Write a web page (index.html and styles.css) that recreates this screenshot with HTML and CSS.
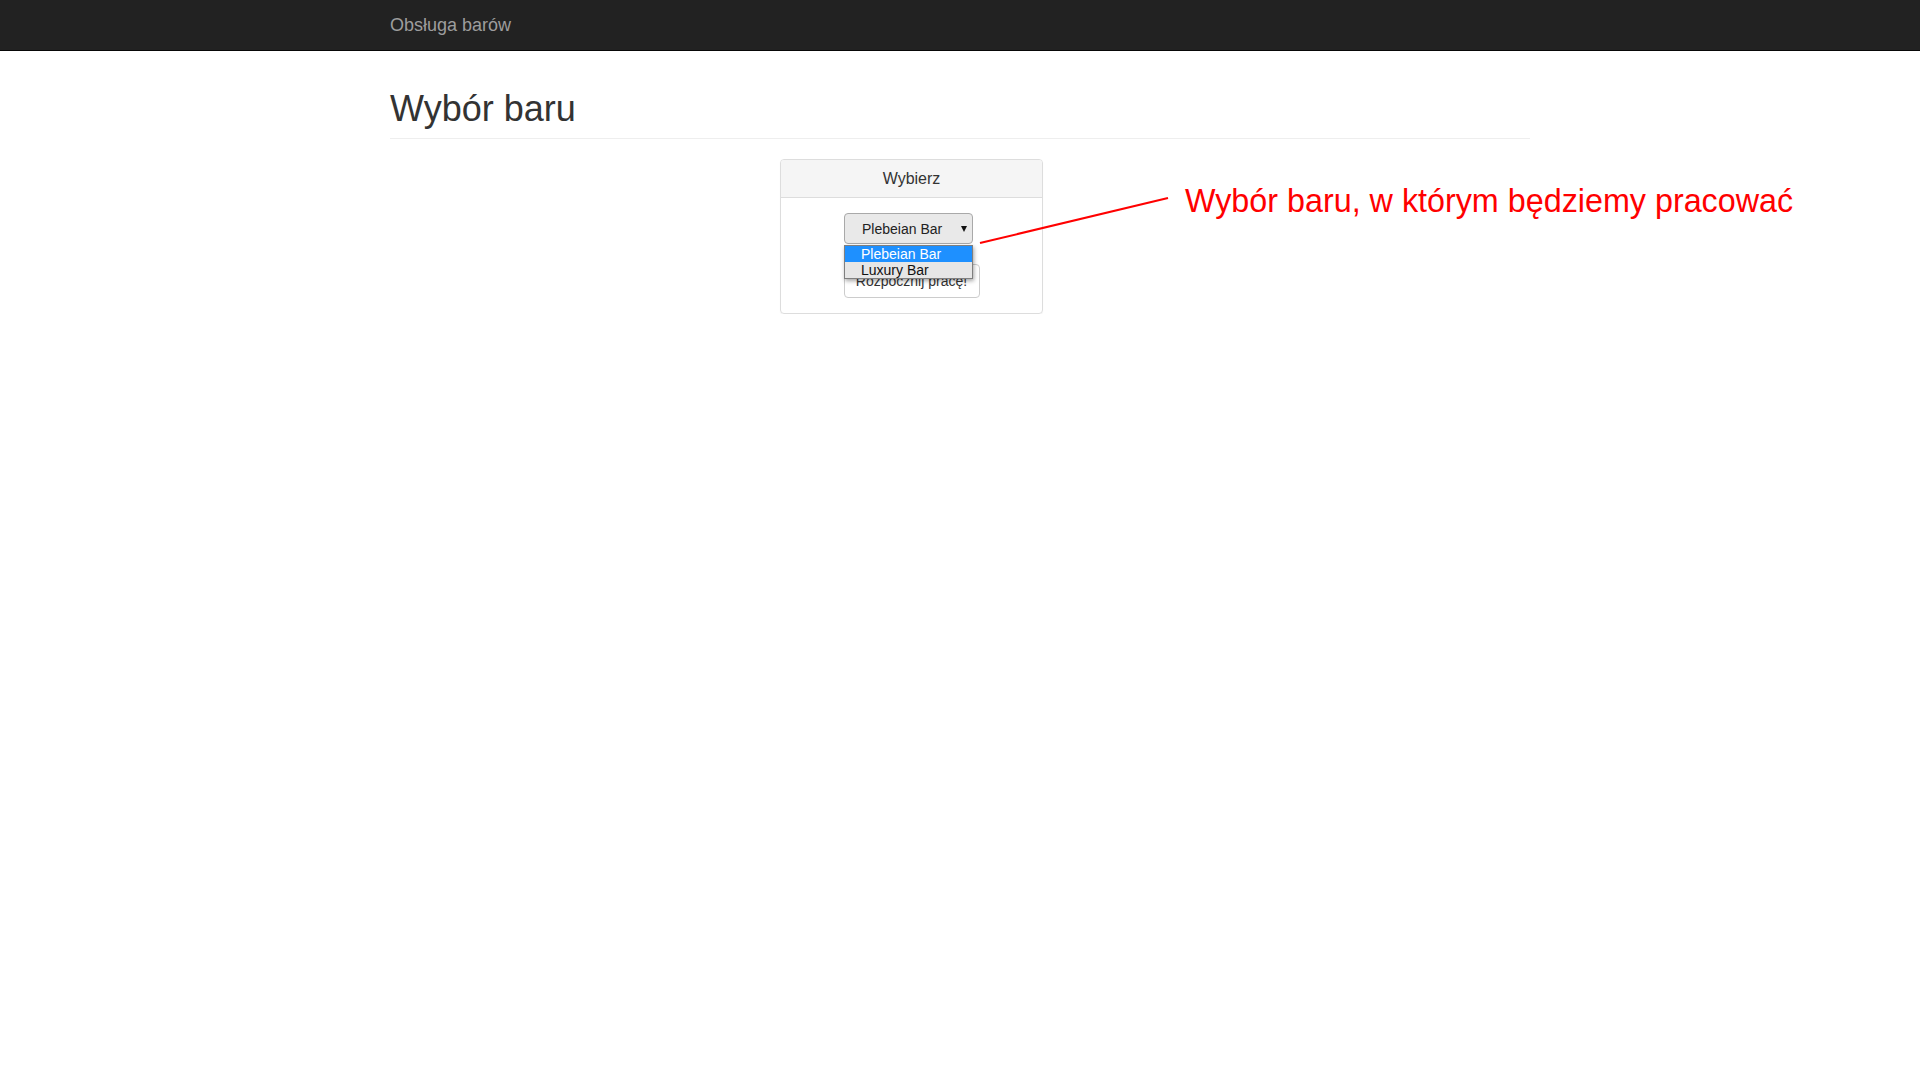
FILE: index.html
```html
<!DOCTYPE html>
<html lang="pl">
<head>
<meta charset="utf-8">
<title>Wybór baru</title>
<link rel="stylesheet" href="styles.css">
</head>
<body>
<nav class="navbar">
  <div class="container">
    <a class="brand" href="#">Obsługa barów</a>
  </div>
</nav>
<main class="container">
  <div class="page-header">
    <h1>Wybór baru</h1>
  </div>
  <div class="panel">
    <div class="panel-heading">Wybierz</div>
    <div class="panel-body">
      <div class="select-wrap">
        <div class="select">
          <span>Plebeian Bar</span>
          <span class="arrow"></span>
        </div>
        <div class="dropdown">
          <div class="option selected">Plebeian Bar</div>
          <div class="option">Luxury Bar</div>
        </div>
      </div>
      <button class="btn" type="button">Rozpocznij pracę!</button>
    </div>
  </div>
</main>
<div class="annotation">
  <svg class="annot-line" width="1920" height="400" viewBox="0 0 1920 400">
    <line x1="980" y1="243" x2="1168" y2="198" stroke="#ff0000" stroke-width="2"/>
  </svg>
  <div class="annot-text">Wybór baru, w którym będziemy pracować</div>
</div>
</body>
</html>
```
FILE: styles.css
```css
html, body {
  margin: 0;
  padding: 0;
  background: #fff;
  font-family: "Liberation Sans", Arial, sans-serif;
  color: #333;
  font-size: 14px;
}
.container {
  width: 1140px;
  margin: 0 auto;
}
.navbar {
  height: 50px;
  background: #222;
  border-bottom: 1px solid #080808;
}
.brand {
  display: block;
  padding: 15px 0;
  font-size: 18px;
  line-height: 20px;
  color: #9d9d9d;
  text-decoration: none;
}
.page-header {
  margin: 38px 0 20px;
  padding-bottom: 9px;
  border-bottom: 1px solid #eee;
}
.page-header h1 {
  margin: 0;
  font-size: 36px;
  font-weight: 500;
  line-height: 1.1;
  color: #333;
}
.panel {
  width: 261px;
  margin-left: 390px;
  border: 1px solid #ddd;
  border-radius: 4px;
  box-shadow: 0 1px 1px rgba(0,0,0,0.05);
}
.panel-heading {
  background: #f5f5f5;
  border-bottom: 1px solid #ddd;
  border-radius: 3px 3px 0 0;
  padding: 10px 15px;
  text-align: center;
  font-size: 16px;
  line-height: 1.1;
  color: #333;
}
.panel-body {
  padding: 15px;
  display: flex;
  flex-direction: column;
  align-items: center;
}
.select-wrap {
  position: relative;
  margin-right: 6px;
  margin-bottom: 20px;
}
.select {
  box-sizing: border-box;
  width: 129px;
  height: 31px;
  background: #e9e9e9;
  border: 1px solid #a9a9a9;
  border-radius: 4px;
  display: flex;
  align-items: center;
  justify-content: space-between;
  padding: 0 5px 0 17px;
  font-size: 14px;
  color: #222;
}
.arrow {
  width: 0;
  height: 0;
  border-left: 3.5px solid transparent;
  border-right: 3.5px solid transparent;
  border-top: 6px solid #111;
  margin-top: 1px;
}
.dropdown {
  position: absolute;
  left: 0;
  top: 32px;
  width: 129px;
  box-sizing: border-box;
  border: 1px solid #7f7f7f;
  background: #e6e6e6;
  box-shadow: 1px 2px 4px rgba(0,0,0,0.35);
  z-index: 5;
}
.option {
  height: 16px;
  line-height: 16px;
  padding-left: 16px;
  font-size: 14px;
  color: #111;
}
.option.selected {
  background: #1e90ff;
  color: #fff;
}
.btn {
  box-sizing: border-box;
  width: 136px;
  height: 34px;
  padding: 6px 0;
  font-family: "Liberation Sans", Arial, sans-serif;
  font-size: 14px;
  line-height: 20px;
  color: #333;
  background: #fff;
  border: 1px solid #ccc;
  border-radius: 4px;
  text-align: center;
}
.annotation {
  position: absolute;
  left: 0;
  top: 0;
  width: 1920px;
  height: 400px;
  pointer-events: none;
}
.annot-line {
  position: absolute;
  left: 0;
  top: 0;
}
.annot-text {
  position: absolute;
  left: 1185px;
  top: 185px;
  font-size: 32.3px;
  line-height: 1;
  color: #ff0000;
  white-space: nowrap;
}
```
